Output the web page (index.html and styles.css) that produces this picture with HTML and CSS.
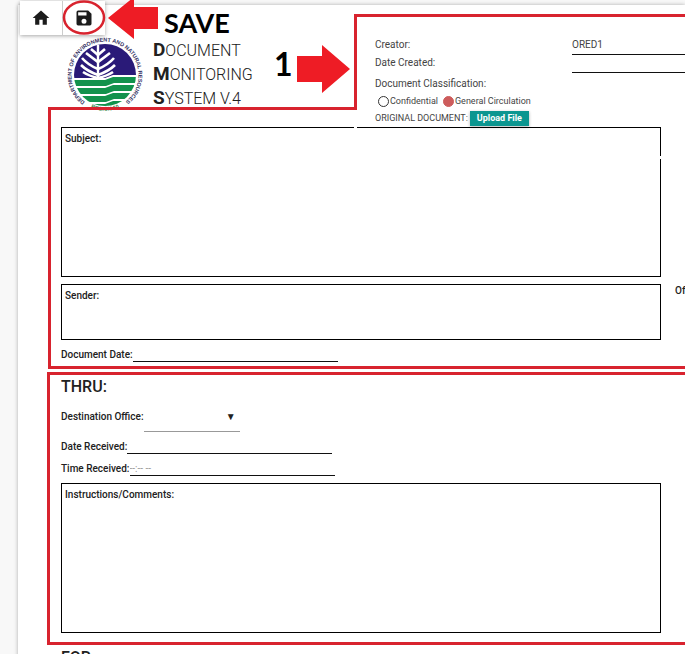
FILE: index.html
```html
<!DOCTYPE html>
<html lang="en">
<head>
<meta charset="utf-8">
<title>Document Monitoring System</title>
<link rel="stylesheet" href="styles.css">
</head>
<body>
<div class="viewport">
  <nav class="toolbar" aria-label="Actions">
    <button class="tool" type="button" aria-label="Home">
      <svg viewBox="0 0 24 24" width="20" height="20"><path d="M10 20v-6h4v6h5v-8h3L12 3 2 12h3v8z"/></svg>
    </button>
    <button class="tool" type="button" aria-label="Save">
      <svg viewBox="0 0 24 24" width="20" height="20"><path d="M17 3H5a2 2 0 0 0-2 2v14a2 2 0 0 0 2 2h14a2 2 0 0 0 2-2V7zm-5 16a3 3 0 1 1 0-6 3 3 0 0 1 0 6zm3-10H5V5h10z"/></svg>
    </button>
  </nav>

  <form class="sheet">
    <header class="header">
      <svg class="logo" viewBox="0 0 152 152" width="76" height="76" role="img" aria-label="Department seal">
        <defs>
          <path id="ring" d="M36 130 A67 67 0 1 1 116 130"/>
          <path id="foot" d="M34 134 A72 72 0 0 0 118 134"/>
          <clipPath id="disc"><circle cx="38" cy="38" r="31"/></clipPath>
        </defs>
        <g transform="scale(2)" clip-path="url(#disc)">
          <rect width="76" height="76" fill="#fff"/>
          <path d="M0 0h76v38H46l-8 3H0z" fill="#2a1a78"/>
          <g fill="#12924c">
            <path d="M0 43h38l8-3h30v6H47l-8 3H0z"/>
            <path d="M0 51h38l8-3h30v6H47l-8 3H0z"/>
            <path d="M0 59h38l8-3h30v6H47l-8 3H0z"/>
            <path d="M0 67h38l8-3h30v12H0z"/>
          </g>
          <g fill="none" stroke="#fff" stroke-width="2.6">
            <path d="M31 6v35" stroke-width="2.4"/>
            <path d="M24 12l7 6 7-6M19 16l12 9 12-9M15 21q6 7 16 11 10-4 16-11M14 28q6 6 17 10 11-4 17-10M16 35q6 4 15 6 9-2 15-6"/>
          </g>
        </g>
        <text class="ring-text"><textPath href="#ring">DEPARTMENT OF ENVIRONMENT AND NATURAL RESOURCES</textPath></text>
        <text class="foot-text" text-anchor="middle"><textPath href="#foot" startOffset="50%">REGION 10</textPath></text>
      </svg>
      <h1 class="title">
        <span><b>D</b>OCUMENT</span>
        <span><b>M</b>ONITORING</span>
        <span><b>S</b>YSTEM V.4</span>
      </h1>
      <div class="meta">
        <div class="meta-row">
          <label for="creator">Creator:</label>
          <input id="creator" class="line" type="text" value="ORED1">
        </div>
        <div class="meta-row">
          <label for="created">Date Created:</label>
          <input id="created" class="line" type="text">
        </div>
        <fieldset class="choices">
          <legend>Document Classification:</legend>
          <label><input type="radio" name="class">Confidential</label>
          <label><input type="radio" name="class" checked>General Circulation</label>
        </fieldset>
        <div class="upload">
          <span>ORIGINAL DOCUMENT:</span>
          <button type="button">Upload File</button>
        </div>
      </div>
    </header>

    <div class="box tall">
      <label for="subject">Subject:</label>
      <textarea id="subject"></textarea>
    </div>
    <div class="sender-row">
      <div class="box">
        <label for="sender">Sender:</label>
        <textarea id="sender"></textarea>
      </div>
      <label class="office">Office: <input class="line" type="text"></label>
    </div>
    <div class="field">
      <label for="docdate">Document Date:</label>
      <input id="docdate" class="line" type="text">
    </div>

    <h2>THRU:</h2>
    <div class="field destination">
      <label for="dest">Destination Office:</label>
      <span class="picker">
        <select id="dest"><option></option></select>
        <span class="caret" aria-hidden="true">▼</span>
      </span>
    </div>
    <div class="field">
      <label for="received">Date Received:</label>
      <input id="received" class="line" type="text">
    </div>
    <div class="field">
      <label for="time">Time Received:</label>
      <input id="time" class="line" type="text" placeholder="--:-- --">
    </div>
    <div class="box tall comments">
      <label for="comments">Instructions/Comments:</label>
      <textarea id="comments"></textarea>
    </div>
    <h2>FOR:</h2>
  </form>
</div>

<svg class="notes" aria-hidden="true">
  <g fill="#fff">
    <rect x="354" y="126" width="3" height="4"/>
    <rect x="659" y="156" width="4" height="3"/>
  </g>
  <g fill="none" stroke="#d8232e" stroke-width="3">
    <path d="M4000 15.500H355.500V108.500H49.500V367.500H4000"/>
    <path d="M4000 373.500H48.500V643.500H4000"/>
    <ellipse cx="84" cy="17.500" rx="20" ry="16" stroke-width="2.500"/>
  </g>
  <g fill="#ee1c25">
    <path d="M108 18L134-3V7h24v22h-24v10z"/>
    <path d="M297 56h25V45l28 24-28 24V82h-25z"/>
  </g>
  <text class="note-save" x="164" y="33">SAVE</text>
  <text class="note-step" x="274" y="76">1</text>
</svg>
</body>
</html>
```
FILE: styles.css
```css
* { box-sizing: border-box; }

body {
  margin: 0;
  background: #fff;
  color: #212121;
  font: 10px/14px Roboto, sans-serif;
  overflow: hidden;
}

input, textarea, select, button {
  margin: 0;
  padding: 0;
  border: 0;
  background: none;
  color: inherit;
  font: inherit;
}

.viewport {
  position: relative;
  height: calc(100vh - 4px);
  overflow: hidden;
  padding: 5px 0 0 18px;
  background: #f8f8f8;
}

.toolbar {
  position: absolute;
  top: 1px;
  left: 20px;
  z-index: 1;
  display: flex;
  background: #fff;
  box-shadow: 0 1px 4px rgba(0, 0, 0, .35);
}

.tool {
  display: grid;
  place-items: center;
  width: 42px;
  height: 34px;
}

.tool + .tool {
  border-left: 1px solid #ccc;
  width: 43px;
}

.tool svg { fill: #1c1c1c; }

.sheet {
  min-height: 100%;
  padding-left: 43px;
  overflow: hidden;
  background: #fff;
  box-shadow: 0 0 4px rgba(0, 0, 0, .3);
}

.header {
  display: flex;
  height: 122px;
}

.logo {
  flex: none;
  margin: 32px 10px 0 6px;
}

.ring-text, .foot-text {
  font: bold 11px "Liberation Sans", sans-serif;
  fill: #33305f;
}

.foot-text { fill: #3c8a4c; }

.title {
  flex: none;
  width: 222px;
  margin: 33px 0 0;
  font-size: 16px;
  font-weight: 300;
  line-height: 24px;
}

.title span {
  display: block;
  height: 24px;
}

.title b {
  font-size: 19px;
  font-weight: 700;
}

.meta {
  flex: 1;
  min-width: 0;
  padding-top: 31px;
  color: #444;
}

.meta-row {
  display: grid;
  grid-template-columns: 197px 1fr;
  height: 18px;
  line-height: 18px;
}

.line {
  min-width: 0;
  border-bottom: 1px solid #111;
}

.choices {
  display: flex;
  gap: 5px;
  margin: 3px 0 0;
  padding: 0 0 0 3px;
  border: 0;
  font-size: 9px;
  line-height: 16px;
}

.choices legend {
  margin-left: -3px;
  padding: 0;
  font-size: 10px;
  line-height: 18px;
}

.choices label {
  display: flex;
  align-items: center;
  gap: 1px;
}

.choices input {
  appearance: none;
  width: 11px;
  height: 11px;
  border: 1px solid #333;
  border-radius: 50%;
}

.choices input:checked {
  border-color: #cd5c5c;
  background: #cd5c5c;
}

.upload {
  display: flex;
  gap: 2px;
  margin-top: 2px;
  font-size: 9px;
  line-height: 15px;
}

.upload button {
  padding: 0 7px;
  background: #0b9690;
  color: #fff;
  font-weight: 700;
  box-shadow: 0 1px 3px rgba(0, 0, 0, .3);
}

.box {
  display: flex;
  flex-direction: column;
  width: 600px;
  height: 56px;
  padding: 4px 3px;
  border: 1px solid #000;
}

.tall { height: 150px; }

.comments { margin-top: 7px; }

.box textarea {
  flex: 1;
  min-height: 0;
  resize: none;
}

.box label, .field label, .office { font-weight: 500; }

.sender-row {
  display: flex;
  margin-top: 7px;
}

.sender-row .box { flex: none; }

.office {
  flex: none;
  margin-left: 14px;
}

.field {
  display: flex;
  height: 14px;
  margin-top: 8px;
}

.field .line { width: 205px; }

.field ::placeholder { color: #999; }

h2 {
  margin: 15px 0 0;
  font-size: 16px;
  font-weight: 500;
  line-height: 20px;
}

.destination {
  height: 29px;
  margin-top: 6px;
  line-height: 28px;
}

.picker {
  display: grid;
  width: 96px;
  border-bottom: 1px solid #999;
}

.picker select, .caret { grid-area: 1 / 1; }

.picker select { appearance: none; }

.caret {
  justify-self: end;
  padding-right: 4px;
  pointer-events: none;
}

.notes {
  position: absolute;
  inset: 0;
  z-index: 2;
  width: 100%;
  height: 100%;
  pointer-events: none;
}

.note-save, .note-step {
  font: 700 27px Lato, sans-serif;
  fill: #000;
}

.note-step { font-size: 32px; }
```
